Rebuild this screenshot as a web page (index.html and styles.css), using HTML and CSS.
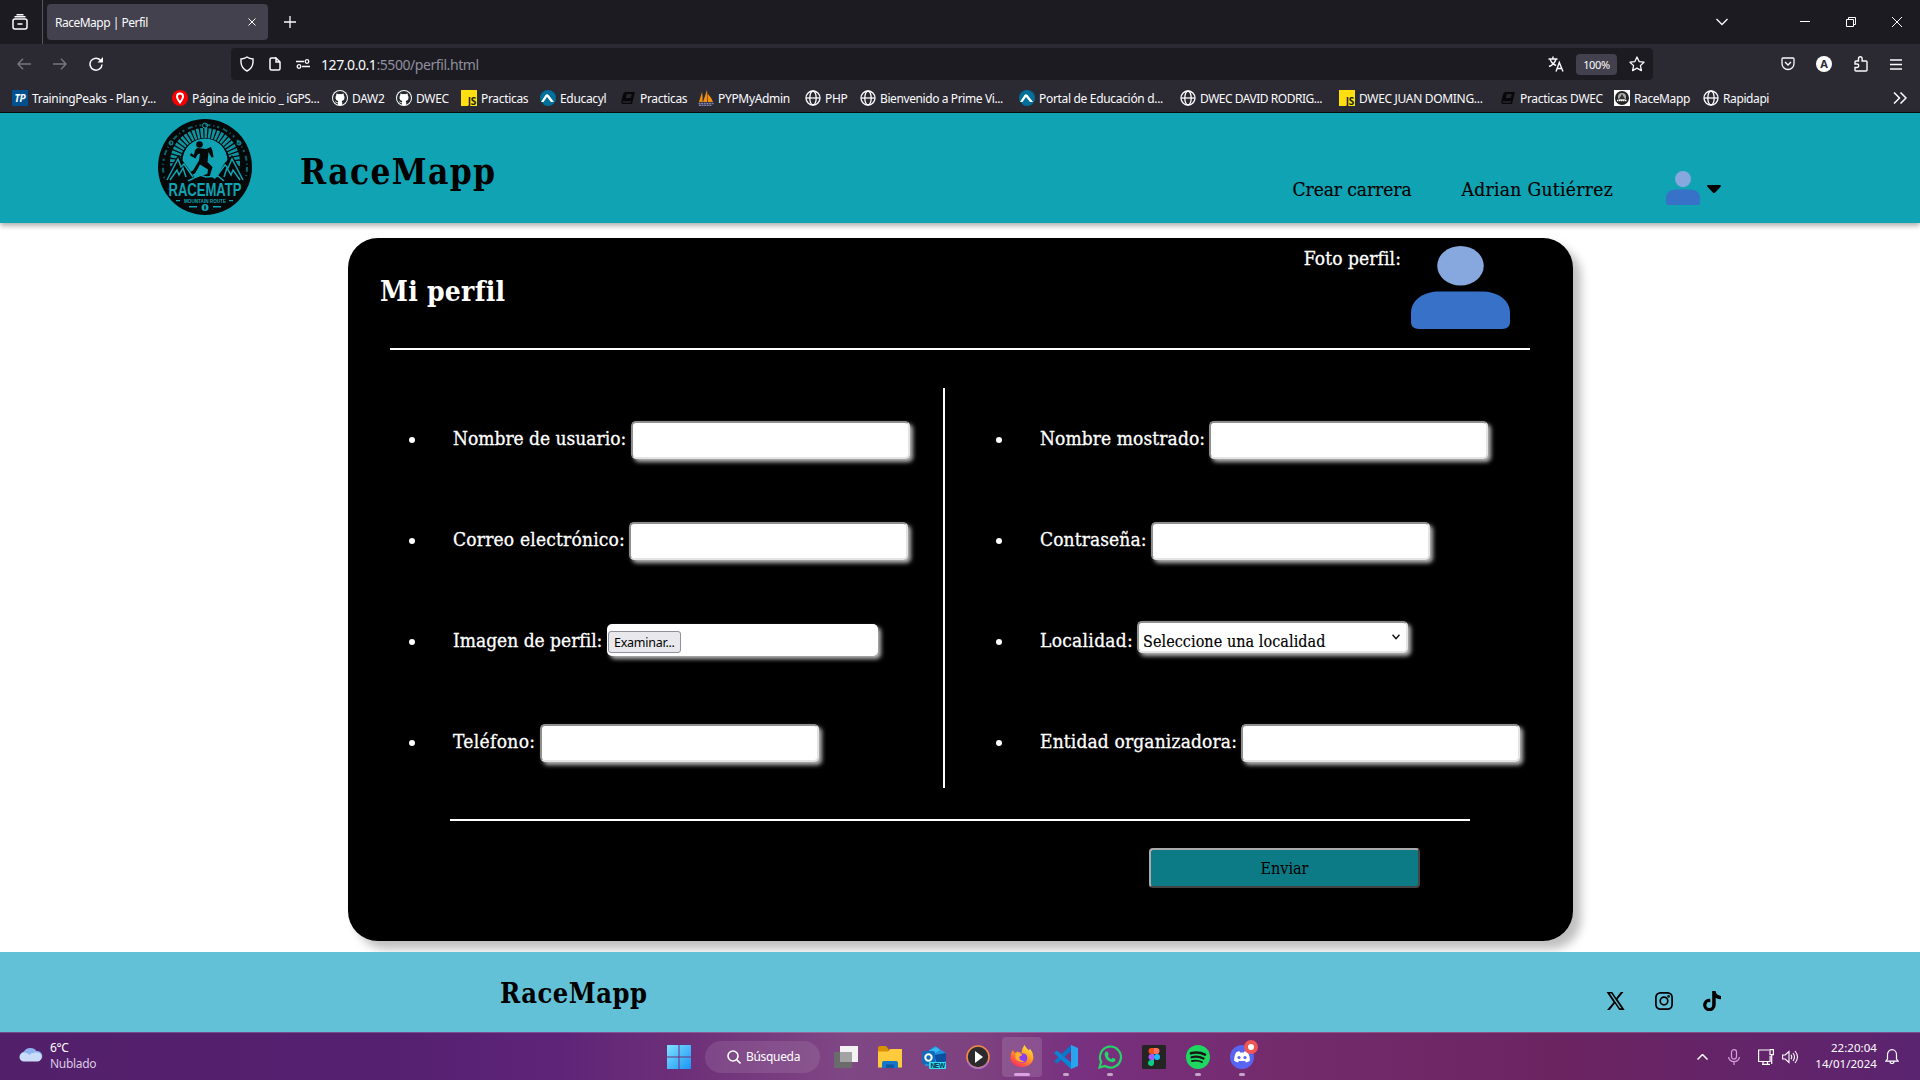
FILE: index.html
```html
<!DOCTYPE html>
<html lang="es">
<head>
<meta charset="utf-8">
<title>RaceMapp | Perfil</title>
<link rel="stylesheet" href="styles.css">
</head>
<body>
<svg class="defs" width="0" height="0">
  <symbol id="globe" viewBox="0 0 16 16"><g fill="none" stroke="#fbfbfe" stroke-width="1.3"><circle cx="8" cy="8" r="7"/><ellipse cx="8" cy="8" rx="3.2" ry="7"/><path d="M1 8h14"/></g></symbol>
  <symbol id="github" viewBox="0 0 16 16"><circle cx="8" cy="8" r="8" fill="#fff"/><circle cx="8" cy="8" r="7" fill="#24292f"/><path fill="#fff" d="M5.800 15v-2.200c-2 .4-2.500-.9-3-1.600.9-.2 1.300 1 2.200 1 .4 0 .7-.1.9-.3.1-.5.3-.8.5-1C4.600 10.600 3.500 9.700 3.500 7.500c0-.9.300-1.600.8-2.200-.1-.5-.1-1.200.1-1.900.8 0 1.500.4 2.100.8a6.500 6.500 0 0 1 3 0c.6-.4 1.300-.8 2.100-.8.2.7.2 1.400.1 1.900.5.600.8 1.300.8 2.200 0 2.200-1.100 3.100-2.900 3.400.3.300.6.800.6 1.500V15z"/></symbol>
  <symbol id="book" viewBox="0 0 16 16"><path fill="#08080a" d="M5 2h10l-3 12H2.500L1 12.500 3.500 3z"/><path d="M6.500 5h5M6 7h5" stroke="#55545c" stroke-width=".8"/><path d="M2.500 12h8.500" stroke="#44434b" stroke-width=".8"/></symbol>
  <symbol id="educa" viewBox="0 0 16 16"><circle cx="8" cy="8" r="8" fill="#00709b"/><path fill="#fff" d="M1 12 5.500 5q1-1.400 2.500-.5 1 .6 1.800 2L14 12h-3L7 7l-3.500 5z"/><path fill="#2b2a33" d="M0 12.500h2.500L4 16H0z"/></symbol>
  <symbol id="person" viewBox="0 0 100 84" preserveAspectRatio="none"><ellipse cx="50" cy="20" rx="23.500" ry="20" fill="#86a8de"/><path fill="#3771c8" d="M0 68C0 54 13 46 29 46H71C87 46 100 54 100 68V77Q100 84 92 84H8Q0 84 0 77Z"/></symbol>
</svg>

<div class="browser">
  <div class="tabs">
    <div class="view"><svg width="16" height="16" viewBox="0 0 16 16" fill="none" stroke="#fbfbfe" stroke-width="1.500"><rect x="1" y="5" width="14" height="10" rx="2"/><path d="M2.500 2.700h11M4.500.7h7M5.500 10h5"/></svg></div>
    <div class="tab"><span class="ui tab-title">RaceMapp | Perfil</span><svg width="8" height="8" viewBox="0 0 8 8" stroke="#fbfbfe"><path d="m.5.5 7 7m0-7-7 7"/></svg></div>
    <svg class="plus" width="12" height="12" viewBox="0 0 12 12" stroke="#fbfbfe" stroke-width="1.300"><path d="M6 0v12M0 6h12"/></svg>
    <div class="window">
      <svg width="12" height="8" viewBox="0 0 12 8" fill="none" stroke="#fbfbfe" stroke-width="1.300"><path d="m.5 1 5.500 5.500L11.500 1"/></svg>
      <svg width="10" height="10" viewBox="0 0 10 10" stroke="#fff"><path d="M0 4.500h10"/></svg>
      <svg width="10" height="10" viewBox="0 0 10 10" fill="none" stroke="#fff"><path d="M.5 2.500h7v7h-7zM2.500 2.500v-2h7v7h-2"/></svg>
      <svg width="10" height="10" viewBox="0 0 10 10" stroke="#fff"><path d="m0 0 10 10M10 0 0 10"/></svg>
    </div>
  </div>
  <div class="toolbar">
    <div class="nav-buttons">
      <svg width="14" height="12" viewBox="0 0 14 12" fill="none" stroke="#77767e" stroke-width="1.400"><path d="M14 6H1m5-5.300L1 6l5 5.300"/></svg>
      <svg width="14" height="12" viewBox="0 0 14 12" fill="none" stroke="#77767e" stroke-width="1.400"><path d="M0 6h13M8 .7 13 6l-5 5.300"/></svg>
      <svg width="14" height="14" viewBox="0 0 14 14" fill="none" stroke="#fbfbfe" stroke-width="1.500"><path d="M12 3.800A6 6 0 1 0 13 7.500"/><path fill="#fbfbfe" stroke="none" d="M14 0v5.500H8.500z"/></svg>
    </div>
    <div class="url">
      <svg width="14" height="16" viewBox="0 0 14 16" fill="none" stroke="#fbfbfe" stroke-width="1.400"><path d="M7 1Q9.500 2.800 13 3v3.500Q12.500 12.500 7 15 1.500 12.500 1 6.500V3Q4.500 2.800 7 1z"/></svg>
      <svg width="12" height="14" viewBox="0 0 12 14" fill="none" stroke="#fbfbfe" stroke-width="1.500"><path d="M7 1H2.500Q1 1 1 2.500v9Q1 13 2.500 13h7q1.500 0 1.500-1.500V5L7 1v4h4"/></svg>
      <svg width="14" height="10" viewBox="0 0 14 10" fill="none" stroke="#fbfbfe" stroke-width="1.300"><path d="M0 2.500h8M6 7.500h8"/><circle cx="11" cy="2.500" r="1.800"/><circle cx="3" cy="7.500" r="1.800"/></svg>
      <span class="ui address"><b>127.0.0.1</b>:5500/perfil.html</span>
      <svg class="translate" width="16" height="16" viewBox="0 0 16 16" fill="none" stroke="#fbfbfe" stroke-width="1.400"><path d="M.5 3h9M5 .5V3M2 3q1.500 4.500 6 6.500M8 3Q6.500 8.500 1 10.500M8 15.500l3.300-9 3.700 9M9.200 12.500h4.600"/></svg>
      <span class="ui zoom">100%</span>
      <svg width="16" height="16" viewBox="0 0 16 16" fill="none" stroke="#fbfbfe" stroke-width="1.300" stroke-linejoin="round"><path d="m8 1 2.100 4.600 4.900.6-3.600 3.400 1 5L8 12.100l-4.400 2.500 1-5L1 6.200l4.900-.6z"/></svg>
    </div>
    <div class="actions">
      <svg width="14" height="14" viewBox="0 0 14 14" fill="none" stroke="#fbfbfe" stroke-width="1.300"><path d="M2 1h10q1 0 1 1v4.500A6 6 0 0 1 1 6.500V2q0-1 1-1zM4 5l3 3 3-3"/></svg>
      <span class="account">A</span>
      <svg width="14" height="16" viewBox="0 0 14 16" fill="none" stroke="#fbfbfe" stroke-width="1.400"><path d="M4.500 5V2.500a1.800 1.800 0 0 1 3.600 0V5H12q1 0 1 1v8q0 1-1 1H2q-1 0-1-1v-2.500h2a1.700 1.700 0 0 0 0-3.500H1V6q0-1 1-1z"/></svg>
      <svg width="12" height="11" viewBox="0 0 12 11" stroke="#fbfbfe" stroke-width="1.300"><path d="M0 1h12M0 5.500h12M0 10h12"/></svg>
    </div>
  </div>
  <div class="bookmarks ui">
    <a><i class="tp">TP</i><span>TrainingPeaks - Plan y...</span></a>
    <a><svg viewBox="0 0 16 16"><circle cx="8" cy="8" r="8" fill="#f80000"/><path fill="none" stroke="#fff" stroke-width="2" d="M8 12.500Q5 8.500 5 6.500a3 3 0 0 1 6 0Q11 8.500 8 12.500z"/></svg><span>Página de inicio _ iGPS...</span></a>
    <a><svg><use href="#github"/></svg><span>DAW2</span></a>
    <a><svg><use href="#github"/></svg><span>DWEC</span></a>
    <a><i class="js">JS</i><span>Practicas</span></a>
    <a><svg><use href="#educa"/></svg><span>Educacyl</span></a>
    <a><svg><use href="#book"/></svg><span>Practicas</span></a>
    <a><svg viewBox="0 0 16 16"><path fill="#f29111" d="M1 12 4 2q1 5 .5 10zM5 12 9 0q1 6 .3 12zM10 12V4q3 3 5 8z"/><path d="M.5 13.500h15M1 15.500h13" stroke="#8183b4" stroke-width="1.600" stroke-dasharray="2 .6"/></svg><span>PYPMyAdmin</span></a>
    <a><svg><use href="#globe"/></svg><span>PHP</span></a>
    <a><svg><use href="#globe"/></svg><span class="tight">Bienvenido a Prime Vi...</span></a>
    <a><svg><use href="#educa"/></svg><span>Portal de Educación d...</span></a>
    <a><svg><use href="#globe"/></svg><span class="tighter">DWEC DAVID RODRIG...</span></a>
    <a><i class="js">JS</i><span>DWEC JUAN DOMING...</span></a>
    <a><svg><use href="#book"/></svg><span>Practicas DWEC</span></a>
    <a><svg viewBox="0 0 16 16"><path fill="#fff" d="M0 0h16v16H0z"/><circle cx="8" cy="8" r="7" fill="#222"/><circle cx="8" cy="7" r="4" fill="#aaa"/><path d="M3 10.500h10" stroke="#fff" stroke-width="1.500" stroke-dasharray="1.500 .5"/><path d="m5 9 3-5 3 5z" fill="#333"/></svg><span class="tight">RaceMapp</span></a>
    <a><svg><use href="#globe"/></svg><span class="tight">Rapidapi</span></a>
    <a class="more"><svg width="14" height="12" viewBox="0 0 14 12" fill="none" stroke="#fbfbfe" stroke-width="1.500"><path d="m1 .5 5.500 5.500L1 11.500M7.500.5 13 6l-5.500 5.500"/></svg></a>
  </div>
</div>

<header class="site-header">
  <svg class="logo" width="94" height="96" viewBox="0 0 94 96">
    <ellipse cx="47" cy="48" rx="47" ry="48" fill="#050808"/>
    <g fill="none" stroke="#10a3b3">
      <circle cx="47" cy="48" r="42" stroke-width="2" stroke-dasharray="5 3 1 3 2 4" opacity=".6"/>
      <circle cx="47" cy="44" r="30" stroke-width="10" stroke-dasharray="2.600 1.200" opacity=".9"/>
      <circle cx="47" cy="6.500" r="2.500"/><circle cx="13" cy="24" r="2"/><circle cx="81" cy="24" r="2"/>
    </g>
    <circle cx="47" cy="42" r="22.500" fill="#10a3b3"/>
    <g fill="#050808">
      <path d="M3 65 20 36l8 10 9 13 12-4 8 5 9-15 8-9 17 29-7 6H12z"/>
      <circle cx="41.500" cy="25.500" r="3.300"/>
      <path d="m39.500 29 8.500 1 5-2 1.500 4 1 6-2 .5-3-5.500-1 10 5 5-3 10-2.500-.5 1-7-8-5-5 9-8 3.500-1-2.500 7-4 6-10 1-7-2.500 1-2 4-5.500-3 1-2.500 3 2 1-5z"/>
    </g>
    <g fill="none" stroke="#10a3b3" stroke-width="1.500">
      <path d="m9 61 11-21 3 8 3-3 9 13M12 61l7-10 2 5 4-7 3 9M85 61 74 40l-4 9-3-3-9 12M82 61l-7-10-2 5-4-7-3 9M30 62l12-6 6 2 12-1 6 5"/>
    </g>
    <g fill="#10a3b3">
      <path fill="#050808" d="M8 62.500h78L80 80Q65 91 47 91T14 80z"/>
      <text x="47" y="62" transform="scale(1 1.25)" text-anchor="middle" textLength="73" lengthAdjust="spacingAndGlyphs" class="logo-name">RACEMATP</text>
      <text x="47" y="83.500" text-anchor="middle" textLength="42" lengthAdjust="spacingAndGlyphs" class="logo-sub">MOUNTAIN ROUTE</text>
      <path d="M18 81h4v1.200h-4zM71 81h4v1.200h-4zM31 87h8v1.500h-8zM55 87h8v1.500h-8z"/>
      <circle cx="47" cy="88.500" r="3.500"/><path fill="#050808" d="M46.300 86.500h1.400v4h-1.400z"/>
    </g>
  </svg>
  <h1>RaceMapp</h1>
  <nav>
    <a class="create">Crear carrera</a>
    <a class="user">Adrian Gutiérrez</a>
    <svg width="34" height="34"><use href="#person"/></svg>
    <svg class="caret" width="14" height="8" viewBox="0 0 14 8"><path d="M1 0h12q1.500.5.5 1.800L8.200 7.400q-1.200 1-2.400 0L.5 1.800Q-.5.500 1 0z"/></svg>
  </nav>
</header>

<main>
  <section class="card">
    <div class="card-head">
      <h2>Mi perfil</h2>
      <span class="photo-label">Foto perfil:</span>
      <svg width="99" height="83"><use href="#person"/></svg>
    </div>
    <form>
      <ul class="fields left">
        <li><label class="w-user">Nombre de usuario:</label><span class="field"></span></li>
        <li><label class="w-mail">Correo electrónico:</label><span class="field"></span></li>
        <li><label class="w-image">Imagen de perfil:</label><span class="field file"><span class="ui browse">Examinar...</span></span></li>
        <li><label class="w-phone">Teléfono:</label><span class="field"></span></li>
      </ul>
      <ul class="fields right">
        <li><label class="w-name">Nombre mostrado:</label><span class="field"></span></li>
        <li><label class="w-pass">Contraseña:</label><span class="field"></span></li>
        <li><label class="w-town">Localidad:</label><span class="field select"><span>Seleccione una localidad</span><svg width="8" height="6" viewBox="0 0 8 6" fill="none" stroke="#111" stroke-width="1.500"><path d="m.5.7 3.500 4 3.500-4"/></svg></span></li>
        <li><label class="w-org">Entidad organizadora:</label><span class="field"></span></li>
      </ul>
    </form>
    <div class="card-foot"><span class="submit">Enviar</span></div>
  </section>
</main>

<footer>
  <h3>RaceMapp</h3>
  <div class="social">
    <svg width="19" height="18" viewBox="0 0 19 18"><path d="M14.800 0h2.700l-6 7.300L18.700 18h-5.500L8.900 11.600 3.700 18H1l6.500-7.800L.6 0h5.700l3.900 5.900zm-1 16.300h1.600L5.400 1.600H3.800z"/></svg>
    <svg width="18" height="18" viewBox="0 0 18 18" fill="none" stroke="#000" stroke-width="1.700"><rect x=".9" y=".9" width="16.200" height="16.200" rx="4.500"/><circle cx="9" cy="9" r="3.800"/><circle cx="13.600" cy="4.400" r=".5"/></svg>
    <svg width="18" height="20" viewBox="0 0 18 20"><path d="M9.200 0h3.400q.3 4 5.400 4.900v3.400q-3 0-5.300-1.600V14A6.300 6.300 0 1 1 7.300 7.700v3.600A2.900 2.900 0 1 0 9.200 14z"/></svg>
  </div>
</footer>

<div class="taskbar ui">
  <svg class="cloud" width="24" height="16" viewBox="0 0 24 16"><path fill="#8fb4f0" d="M5 15a5 5 0 0 1 0-9.500A7 6 0 0 1 17.500 5 5 5 0 0 1 19 15z"/><path fill="#c9ddfa" d="M5 15.500a4.500 4.500 0 0 1 0-9q4 0 5 2.500 3-3 7-2.500a4.500 4.500 0 0 1 2 9z"/></svg>
  <div class="weather"><span>6°C</span><span class="dim">Nublado</span></div>
  <div class="apps">
    <svg class="start" width="24" height="24" viewBox="0 0 24 24"><defs><linearGradient id="win" x2="1" y2="1"><stop stop-color="#7fe3ff"/><stop offset="1" stop-color="#1a93f5"/></linearGradient></defs><path fill="url(#win)" d="M0 0h11.500v11.500H0zM12.500 0H24v11.500H12.500zM0 12.500h11.500V24H0zM12.500 12.500H24V24H12.500z"/></svg>
    <div class="search"><svg width="14" height="14" viewBox="0 0 14 14" fill="none" stroke="#fff" stroke-width="1.600"><circle cx="6" cy="6" r="5"/><path d="m9.500 9.500 4 4"/></svg><span>Búsqueda</span></div>
    <div class="app"><svg viewBox="0 0 24 24"><path fill="#f3f1f4" d="M6 1h18v16H6z"/><path fill="#6b6b6b" d="M0 7h18v16H0z"/><path fill="#a3a2a4" d="M6 7h12v10H6z"/></svg></div>
    <div class="app"><svg viewBox="0 0 24 24"><path fill="#d99100" d="M0 3q0-2 2-2h6l2.500 3V8H0z"/><path fill="#ffcb3d" d="M0 6.500h10L12 4h12v18.500H0z"/><path fill="#1676c8" d="M4 23v-5q0-2 2-2h12q2 0 2 2v5z"/><path fill="#0a5a9e" d="M8 19.500h8V23H8z"/></svg></div>
    <div class="app"><svg viewBox="0 0 24 24"><path fill="#1e90e0" d="M3 8 13 1l11 7v13H3z"/><path fill="#0a4fa0" d="m12 10 12-2v8l-8 5z"/><path fill="#35b8f1" d="m5 7 9-5 4 3-9 6z"/><rect y="6" width="13" height="13" rx="2" fill="#0f6cbd"/><circle cx="6.500" cy="12.500" r="3.200" fill="none" stroke="#fff" stroke-width="2"/><rect x="7" y="17" width="17" height="7" rx="1" fill="#35e0ee"/><text x="8.500" y="23" class="new">NEW</text></svg></div>
    <div class="app"><svg viewBox="0 0 24 24"><circle cx="12" cy="12" r="11" fill="#2c2a2e" stroke="#f08a4b" stroke-width="1.600"/><path d="M2 17a11 11 0 0 0 20 0" fill="none" stroke="#a36fd0" stroke-width="1.600"/><path fill="#fff" d="M9 6v12l8-6z"/></svg></div>
    <div class="app active"><svg viewBox="0 0 24 24"><defs><linearGradient id="fx" x1=".9" y1="0" x2=".3" y2="1"><stop stop-color="#fff04a"/><stop offset=".5" stop-color="#ff9a1f"/><stop offset="1" stop-color="#ff2c5f"/></linearGradient></defs><path fill="url(#fx)" d="M14.500 0q1.500 3 4.500 5.500l1-2q4.500 6 3 11.500a11.500 9.500 0 0 1-22.500-1Q0 8 3 5l1.500 3 3-1.500 4 1.500Q11.500 4 14.500 0z"/><circle cx="12.500" cy="13" r="4.800" fill="#8a3ff0"/><path fill="#ffb02e" d="M5.500 8.500q4-1.500 7 1.500l-3 1.500q-1 4 5 5-6 2-9-3z"/></svg></div>
    <div class="app on"><svg viewBox="0 0 24 24"><path fill="#2ba3ee" d="m17 0 7 3v18l-7 3z"/><path fill="#0a78c8" d="m17 0-.5 6.500L3 18.500l-3-2.300z"/><path fill="#0b84d6" d="m0 8 3-2.500 14 12V24z"/></svg></div>
    <div class="app on"><svg viewBox="0 0 24 24"><path fill="none" stroke="#25d366" stroke-width="2.200" d="m1.500 22.500 1.600-5.700A10.500 10.500 0 1 1 7 21z"/><path fill="#25d366" d="M8 6.500h1.500l1.300 3-1 1.500q1.200 2.300 3.500 3.200l1.400-1.500 2.800 1.300q0 3-3 3.300Q8 16.800 6.500 9.500q0-2 1.500-3z"/></svg></div>
    <div class="app"><svg viewBox="0 0 24 24"><rect width="24" height="24" rx="1.500" fill="#242424"/><path fill="#f24e1e" d="M12 3H9.500a3 3 0 0 0 0 6H12z"/><path fill="#ff7262" d="M12 3h2.500a3 3 0 0 1 0 6H12z"/><path fill="#a259ff" d="M12 9H9.500a3 3 0 0 0 0 6H12z"/><circle cx="15" cy="12" r="3" fill="#1abcfe"/><path fill="#0acf83" d="M12 15H9.500a3 3 0 1 0 2.500 3z"/></svg></div>
    <div class="app on"><svg viewBox="0 0 24 24"><circle cx="12" cy="12" r="12" fill="#1ed760"/><g fill="none" stroke="#181818" stroke-linecap="round"><path stroke-width="2.600" d="M5 8.300q7.500-2 14 1.400"/><path stroke-width="2.200" d="M5.500 12.300q6.500-1.600 12 1.200"/><path stroke-width="1.800" d="M6 16q5.500-1.300 10 1"/></g></svg></div>
    <div class="app on"><svg viewBox="0 0 24 24"><circle cx="12" cy="12" r="12" fill="#5865f2"/><path fill="#fff" d="M6 7.500Q8 6.300 9.500 6.200l.7 1.200h3.600l.7-1.200q1.500.1 3.500 1.300 2 3.500 2 8-1.500 1.500-4 2l-1-1.600H9L8 17.500q-2.500-.5-4-2 0-4.500 2-8z"/><circle cx="9" cy="12.500" r="1.600" fill="#5865f2"/><circle cx="15" cy="12.500" r="1.600" fill="#5865f2"/></svg><i class="badge"></i></div>
  </div>
  <div class="tray">
    <svg width="11" height="6" viewBox="0 0 11 6" fill="none" stroke="#fff" stroke-width="1.500"><path d="m.5 5.500 5-5 5 5"/></svg>
    <svg width="12" height="16" viewBox="0 0 12 16" fill="none" stroke="#dc9be0" stroke-width="1.200"><rect x="3.500" y=".6" width="5" height="9.500" rx="2.500"/><path d="M.6 8a5.400 4.700 0 0 0 10.800 0M6 12.500V16"/></svg>
    <svg width="16" height="16" viewBox="0 0 16 16" fill="none" stroke="#fff" stroke-width="1.200"><path d="M11 1H.6v11.500h11.500V7M4 15.400h8M5 12.500v3M9.500 12.500v3M12 .6h3.400v5H12zM13.700 5.600V15"/></svg>
    <svg width="17" height="14" viewBox="0 0 17 14" fill="none" stroke="#fff" stroke-width="1.100"><path d="M.6 5v4h2.600L7 12.500v-11L3.200 5zM9 4.800q1.500 2.200 0 4.400M11 3q3 4 0 8M13 1q5 6 0 12"/></svg>
    <div class="clock"><span>22:20:04</span><span>14/01/2024</span></div>
    <svg width="14" height="15" viewBox="0 0 14 15" fill="none" stroke="#fff" stroke-width="1.200"><path d="M2.500 10V5.500a4.500 4.900 0 0 1 9 0V10l1.700 2.200H.8zM5 12.500a2 2 0 0 0 4 0"/></svg>
  </div>
</div>
</body>
</html>
```
FILE: styles.css
```css
* { box-sizing: border-box; }
body { margin: 0; width: 1920px; height: 1080px; overflow: hidden; background: #fff; color: #000; font-family: "DejaVu Serif Condensed", "DejaVu Serif", serif; font-stretch: condensed; display: flex; flex-direction: column; }
h1, h2, h3, ul { margin: 0; padding: 0; }
svg { display: block; flex: none; }
span, label, a, h1, h2, h3 { white-space: nowrap; }
.defs { position: absolute; }
.ui { font-family: "Noto Sans", sans-serif; font-stretch: normal; font-size: 12px; letter-spacing: -.32px; }

/* browser chrome */
.browser { height: 113px; background: #2b2a33; border-bottom: 1px solid #0c0c0d; color: #fbfbfe; flex: none; }
.tabs { height: 44px; background: #1c1b22; display: flex; align-items: center; }
.view { width: 43px; height: 44px; padding: 14px 0 0 12px; border-right: 1px solid #57565f; }
.tab { width: 221px; height: 36px; margin-left: 4px; padding: 0 12px 0 8px; background: #42414d; border-radius: 4px; display: flex; align-items: center; justify-content: space-between; }
.tab-title { letter-spacing: -.5px; }
.plus { margin-left: 16px; }
.window { margin-left: auto; display: flex; align-items: center; padding-right: 18px; }
.window svg + svg { margin-left: 36px; }
.window svg:nth-child(2) { margin-left: 72px; }
.toolbar { height: 40px; display: flex; align-items: center; }
.nav-buttons { width: 231px; padding-left: 17px; display: flex; align-items: center; gap: 22px; }
.url { width: 1422px; height: 32px; border-radius: 4px; background: #1c1b22; display: flex; align-items: center; padding: 0 8px 0 9px; }
.url svg:nth-of-type(2), .url svg:nth-of-type(3) { margin-left: 15px; }
.address { margin-left: 11px; font-size: 14px; letter-spacing: -.43px; color: #8f8f9d; }
.address b { font-weight: 400; color: #fbfbfe; }
.url .translate { margin-left: auto; }
.zoom { width: 41px; height: 21px; margin: 0 12px; line-height: 21px; border-radius: 4px; background: #42414d; text-align: center; font-size: 11px; }
.actions { margin-left: auto; padding-right: 18px; display: flex; align-items: center; }
.actions svg:nth-of-type(2) { margin: 0 22px; }
.account { width: 16px; height: 16px; margin-left: 21px; border-radius: 50%; background: #fff; color: #2b2a33; font: bold 11px/16px "Noto Sans", sans-serif; text-align: center; }
.bookmarks { height: 28px; display: grid; grid-template-columns: 160px 160px 64px 65px 79px 80px 78px 107px 55px 159px 161px 159px 161px 114px 89px 190px 15px; padding-left: 12px; align-items: center; }
.bookmarks a { display: flex; align-items: center; gap: 4px; min-width: 0; }
.bookmarks a:not(.more) svg, .tp, .js { width: 16px; height: 16px; flex: none; }
.tight { letter-spacing: -.4px; }
.tighter { letter-spacing: -.48px; }
.tp { background: #00508f; color: #fff; font: italic bold 10px/16px "Noto Sans", sans-serif; text-align: center; }
.js { background: #ffdf0f; color: #222; font: bold 10px/9px "Noto Sans", sans-serif; text-align: right; padding: 7px 1px 0 0; letter-spacing: -.3px; }

/* site header */
.site-header { height: 110px; flex: none; background: #10a3b3; display: flex; padding-left: 158px; padding-right: 199px; position: relative; box-shadow: 0 3px 5px rgba(0,0,0,.3); }
.logo { margin-top: 6px; }
.logo-name { font: bold 15px "Liberation Sans", sans-serif; }
.logo-sub { font: bold 4.500px "Liberation Sans", sans-serif; }
h1 { margin: 34px 0 0 48px; font-size: 35px; line-height: 50px; letter-spacing: 1.3px; }
nav { margin-left: auto; display: flex; align-items: center; height: 40px; margin-top: 56px; font-size: 19px; -webkit-text-stroke: .2px; }
nav a + a { margin-left: 50px; }
.create { letter-spacing: -.05px; }
.user { letter-spacing: .33px; }
nav svg { margin-left: 53px; margin-top: -2px; }
nav .caret { margin-left: 7px; margin-top: 0; }

/* profile card */
main { height: 729px; flex: none; padding: 15px 0 0 348px; overflow: hidden; }
.card { width: 1225px; height: 703px; background: #000; color: #fff; border-radius: 30px; box-shadow: 8px 8px 10px rgba(0,0,0,.25); font-size: 19px; letter-spacing: .1px; }
.card-head { height: 112px; margin: 0 43px 0 42px; border-bottom: 2px solid #fff; display: flex; align-items: flex-start; padding-right: 20px; }
h2 { margin: 34px auto 0 -10px; font-size: 28px; line-height: 40px; letter-spacing: .25px; }
.photo-label { margin: 7px 10px 0 0; line-height: 26px; -webkit-text-stroke: .3px; }
.card-head svg { margin-top: 8px; }
form { display: flex; height: 469px; padding-top: 38px; }
.fields { height: 400px; list-style: none; }
.left { width: 597px; padding-left: 60px; border-right: 2px solid #fff; }
.right { padding-left: 50px; }
.fields li { height: 101px; display: flex; align-items: center; }
.fields li::before { content: ""; width: 6px; height: 6px; border-radius: 50%; background: #fff; margin: 2px 38px 0 1px; }
label { -webkit-text-stroke: .3px; margin-bottom: 2px; }
.w-user { width: 178px; letter-spacing: 0; }
.w-mail { width: 176px; letter-spacing: .2px; }
.w-image { width: 154px; letter-spacing: 0; }
.w-phone { width: 87px; letter-spacing: .35px; }
.w-name { width: 169px; }
.w-pass { width: 111px; }
.w-town { width: 97px; letter-spacing: .3px; }
.w-org { width: 201px; letter-spacing: .15px; }
.field { width: 279px; height: 38px; margin-top: 3px; background: #fff; border: 2px solid #8f8f8f; border-right-color: #e3e3e3; border-bottom-color: #e3e3e3; border-radius: 5px; box-shadow: 3px 3px 4px #b9b9b9; color: #000; }
.file { width: 271px; height: 32px; margin-top: -1px; border: 0; padding: 7px 0 0 1px; }
.browse { display: block; width: 73px; height: 22px; line-height: 21px; padding-left: 5px; border: 1px solid #8f8f9d; border-radius: 3px; background: #e9e9ed; font-size: 12.500px; letter-spacing: -.25px; }
.select { width: 271px; height: 32px; margin-top: -7px; display: flex; align-items: center; justify-content: space-between; padding: 8px 6px 0 4px; font-size: 16px; letter-spacing: .06px; -webkit-text-stroke: .15px; }
.select svg { margin-top: -9px; }
.card-foot { width: 1020px; margin-left: 102px; border-top: 2px solid #fff; padding-top: 27px; }
.submit { width: 271px; height: 40px; margin-left: 699px; display: flex; align-items: center; justify-content: center; background: #0c7b86; color: #000; font-size: 16px; letter-spacing: 0; border: 2px solid #aaa; border-right-color: #444; border-bottom-color: #444; border-radius: 4px; }

/* footer */
footer { height: 80px; flex: none; background: #62c1d6; display: flex; justify-content: space-between; padding: 0 199px 0 500px; position: relative; }
h3 { margin-top: 22px; font-size: 27px; line-height: 40px; letter-spacing: .5px; }
.social { display: flex; align-items: center; gap: 30px; padding-top: 18px; }

/* taskbar */
.taskbar { height: 48px; flex: none; border-top: 1px solid rgba(255,255,255,.2); background: linear-gradient(90deg, #52206b 0, #562070 400px, #5e2478 560px, #6d2f78 680px, #804785 850px, #7d417f 980px, #783080 1080px, #742b6c 1280px, #6c2461 1560px, #5b2470 1920px); color: #fff; display: flex; align-items: center; position: relative; }
.cloud { margin: -5px 0 0 19px; }
.weather { width: 100px; margin: -1px 0 0 7px; display: flex; flex-direction: column; line-height: 16px; }
.dim { color: #dcc9e2; }
.apps { display: flex; align-items: center; margin-left: 517px; }
.search { width: 115px; height: 32px; margin: 0 6px 0 14px; padding-left: 22px; border-radius: 16px; background: rgba(255,255,255,.1); display: flex; align-items: center; gap: 5px; }
.app { width: 40px; height: 40px; margin-right: 4px; border-radius: 4px; display: flex; align-items: center; justify-content: center; position: relative; }
.app svg { width: 24px; height: 24px; }
.new { font: bold 6.500px "Liberation Sans", sans-serif; fill: #002d4d; }
.active { background: rgba(255,255,255,.13); }
.active::after, .on::after { content: ""; position: absolute; bottom: 1px; left: 17px; width: 6px; height: 3px; border-radius: 2px; background: #c5a5c8; }
.active::after { left: 12px; width: 16px; background: #dda0e6; }
.badge { position: absolute; right: 4px; top: 4px; width: 14px; height: 14px; border-radius: 50%; background: #fff; border: 4px solid #ee5555; }
.badge { right: 4px; top: 3px; }
.tray { margin-left: auto; padding-right: 21px; display: flex; align-items: center; }
.tray svg:nth-of-type(2) { margin-left: 20px; }
.tray svg:nth-of-type(3) { margin-left: 18px; }
.tray svg:nth-of-type(4) { margin-left: 8px; }
.clock { width: 78px; margin: -2px 8px 0 0; line-height: 16px; display: flex; flex-direction: column; align-items: flex-end; font-size: 11.500px; letter-spacing: .05px; }
```
